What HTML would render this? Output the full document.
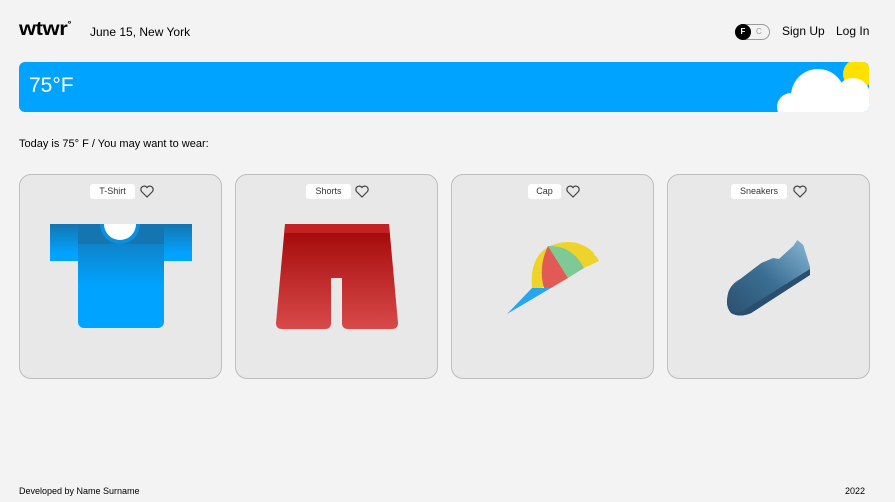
<!DOCTYPE html>
<html><head><style>
*{margin:0;padding:0;box-sizing:border-box}
body{width:895px;height:502px;background:#f3f3f3;font-family:"Liberation Sans",sans-serif;color:#000;position:relative;overflow:hidden}
.abs{position:absolute}
.card{position:absolute;top:174px;width:203px;height:205px;background:#e8e8e8;border:1px solid #bdbdbd;border-radius:12px}
.lbl{position:absolute;top:9px;height:15px;background:#fff;border-radius:3px;font-size:9px;line-height:15px;text-align:center;color:#333}
.heart{position:absolute;top:10px}
</style></head><body>
<div class="abs" style="left:19px;top:19px;font-size:19px;font-weight:bold;letter-spacing:-0.3px;transform:scaleX(1.15);transform-origin:left">wtwr<span style="font-size:9px;vertical-align:top">°</span></div>
<div class="abs" style="left:90px;top:25px;font-size:12px">June 15, New York</div>
<div class="abs" style="left:735px;top:24px;width:35px;height:16px;border:1px solid #999;border-radius:9px"></div>
<div class="abs" style="left:735px;top:24px;width:16px;height:16px;background:#000;border-radius:50%;color:#fff;font-size:8px;line-height:16px;text-align:center;font-weight:bold">F</div>
<div class="abs" style="left:756px;top:24px;font-size:8px;line-height:16px;color:#999">C</div>
<div class="abs" style="left:782px;top:24px;font-size:12px">Sign Up</div>
<div class="abs" style="left:836px;top:24px;font-size:12px">Log In</div>
<div class="abs" style="left:19px;top:62px;width:850px;height:50px;background:#00a3ff;border-radius:6px;overflow:hidden">
<div class="abs" style="left:10px;top:12px;font-size:21px;color:#fff">75°F</div>
<svg class="abs" style="left:750px;top:0" width="100" height="50">
<circle cx="89" cy="12" r="15" fill="#ffe100"/>
<circle cx="49" cy="34" r="27" fill="#fff"/>
<circle cx="84" cy="33" r="17" fill="#fff"/>
<circle cx="22" cy="45" r="14" fill="#fff"/>
<rect x="22" y="36" width="78" height="14" fill="#fff"/>
</svg></div>
<div class="abs" style="left:19px;top:138px;font-size:11px">Today is 75° F / You may want to wear:</div>
<svg width="0" height="0" style="position:absolute"><defs>
<linearGradient id="tb" x1="0" y1="0" x2="0" y2="1"><stop offset="0" stop-color="#1575b0"/><stop offset="0.6" stop-color="#00a3ff"/></linearGradient>
<linearGradient id="ts" x1="0" y1="0" x2="0" y2="1"><stop offset="0" stop-color="#1575b0"/><stop offset="0.8" stop-color="#00a3ff"/></linearGradient>
<linearGradient id="sr" x1="0" y1="0" x2="0" y2="1"><stop offset="0.1" stop-color="#a80c0c"/><stop offset="1" stop-color="#d84a4a"/></linearGradient>
<linearGradient id="sn" x1="1" y1="0" x2="0" y2="1"><stop offset="0" stop-color="#8ab8d6"/><stop offset="0.5" stop-color="#3b6f93"/><stop offset="1" stop-color="#2a4f6e"/></linearGradient>
<path id="hp" d="M7 12 L1.5 6.5 A3 3 0 0 1 7 2.5 A3 3 0 0 1 12.5 6.5 Z" fill="none" stroke="#444" stroke-width="1.2"/>
</defs></svg>
<div class="card" style="left:19px"><div class="lbl" style="left:70px;width:45px">T-Shirt</div><svg class="heart" style="left:120px" width="14" height="14"><use href="#hp"/></svg>
<svg class="abs" style="left:0;top:0" width="203" height="205">
<rect x="30" y="49" width="142" height="37" fill="url(#ts)"/>
<rect x="58" y="49" width="86" height="104" rx="6" fill="url(#tb)"/>
<rect x="58" y="49" width="86" height="20" fill="#1575b0"/>
<circle cx="100" cy="49" r="20" fill="#0d8fe0"/>
<circle cx="100" cy="49" r="16" fill="#fff"/>
<rect x="78" y="28" width="44" height="21" fill="#e8e8e8"/>
</svg></div>
<div class="card" style="left:235px"><div class="lbl" style="left:70px;width:45px">Shorts</div><svg class="heart" style="left:119px" width="14" height="14"><use href="#hp"/></svg>
<svg class="abs" style="left:0;top:0" width="203" height="205">
<path d="M49 49 H153 L162 148 Q162 154 156 154 H112 Q106 154 106 148 V103 H95 V148 Q95 154 89 154 H46 Q40 154 40 148 Z" fill="url(#sr)"/>
<rect x="49" y="49" width="104" height="9" fill="#c42222"/>
</svg></div>
<div class="card" style="left:451px"><div class="lbl" style="left:76px;width:33px">Cap</div><svg class="heart" style="left:114px" width="14" height="14"><use href="#hp"/></svg>
<svg class="abs" style="left:0;top:0" width="203" height="205">
<path d="M80 113 Q77 80 100 70 Q126 61 143 79 L147 86 L89 113 Z" fill="#eed42a"/>
<path d="M96 71 Q86 92 92 113 L99 113 L116 103 Z" fill="#e25a55"/>
<path d="M96 71 Q120 70 132 93 L116 103 Z" fill="#7fc996"/>
<circle cx="146" cy="78" r="4" fill="#e8e8e8"/>
<path d="M80 113 L99 113 L55 139 Z" fill="#28a5ef"/>
</svg></div>
<div class="card" style="left:667px"><div class="lbl" style="left:63px;width:56px">Sneakers</div><svg class="heart" style="left:125px" width="14" height="14"><use href="#hp"/></svg>
<svg class="abs" style="left:0;top:0" width="203" height="205">
<g transform="translate(58,0) scale(0.84,1) translate(-58,0)">
<path d="M60 120 Q62 110 75 104 L100 88 L114 83 L121 84 L138 71 L143 65 L150 70 L158 92 L158 100 L88 138 Q74 143 64 138 Q57 132 60 120 Z" fill="url(#sn)"/>
<path d="M59 127 Q62 141 76 137 L158 94 L158 100 L88 138 Q74 143 64 138 Z" fill="#2a4f6e"/>
</g>
</svg></div>
<div class="abs" style="left:19px;top:486px;font-size:9px">Developed by Name Surname</div>
<div class="abs" style="left:845px;top:486px;font-size:9px">2022</div>
</body></html>
